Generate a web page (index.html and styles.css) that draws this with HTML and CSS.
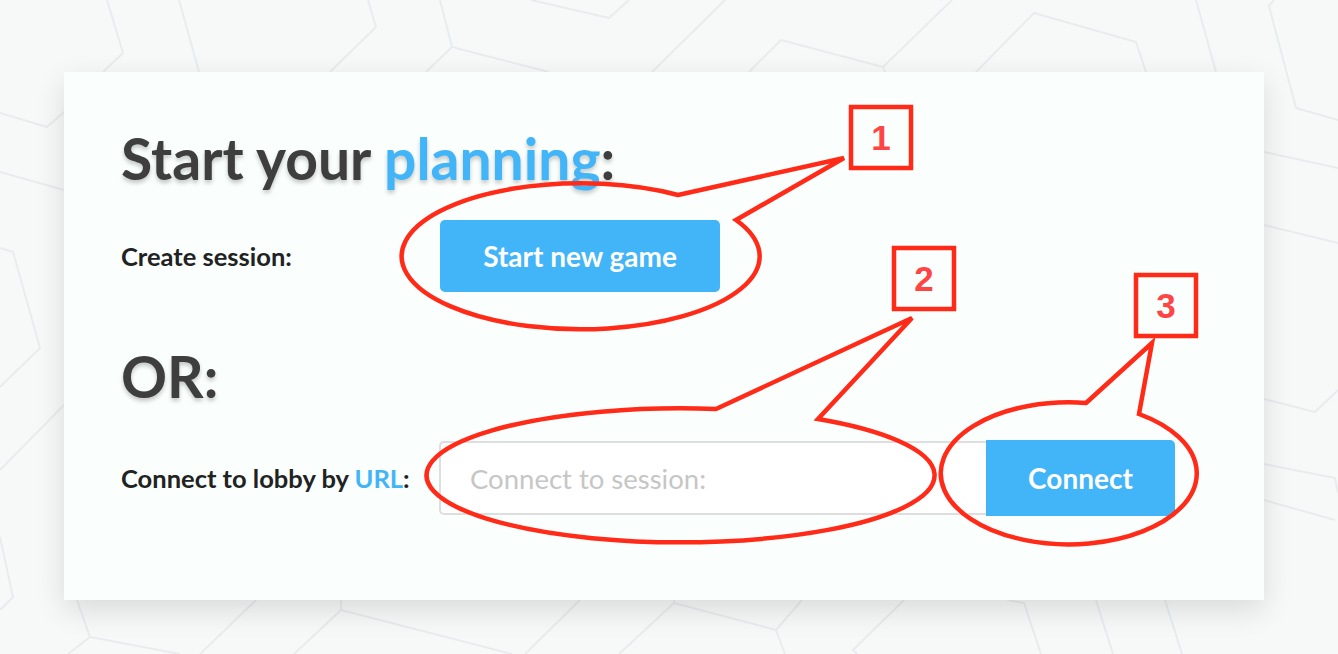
FILE: index.html
```html
<!DOCTYPE html>
<html lang="en">
<head>
<meta charset="utf-8">
<title>Start your planning</title>
<link rel="stylesheet" href="styles.css">
</head>
<body>
<div class="page">
  <main class="card">
    <h1 class="heading">Start your <span class="accent">planning</span>:</h1>
    <div class="row row-create">
      <span class="label">Create session:</span>
      <button class="btn btn-start" type="button">Start new game</button>
    </div>
    <h2 class="heading heading-or">OR:</h2>
    <div class="row row-connect">
      <span class="label">Connect to lobby by <span class="accent">URL</span>:</span>
      <div class="connect-group">
        <input class="session-input" type="text" placeholder="Connect to session:">
        <button class="btn btn-connect" type="button">Connect</button>
      </div>
    </div>
  </main>

  <svg class="annotations" width="1338" height="654" viewBox="0 0 1338 654" aria-hidden="true">
    <g class="marks">
      <path d="M678 195 L844 158 L736 220 A179 73 0 1 1 678 195 Z"/>
      <path d="M716 409 L912 318 L818 419 A254 67 0 1 1 716 409 Z"/>
      <path d="M1086 403 L1152 343 L1139 414 A128 71 0 1 1 1086 403 Z"/>
      <rect x="851" y="107" width="60" height="61"/>
      <rect x="894" y="248" width="60" height="61"/>
      <rect x="1136" y="275" width="60" height="61"/>
    </g>
    <g class="nums">
      <text x="881" y="150">1</text>
      <text x="924" y="291">2</text>
      <text x="1166" y="318">3</text>
    </g>
  </svg>
</div>
</body>
</html>
```

FILE: styles.css
```css
* { box-sizing: border-box; }

html, body {
  margin: 0;
  padding: 0;
}

body {
  width: 1338px;
  height: 654px;
  overflow: hidden;
  font-family: Lato, "Open Sans", "Liberation Sans", sans-serif;
  background-color: #f7f9f9;
  background-image: url("data:image/svg+xml;utf8,<svg xmlns='http://www.w3.org/2000/svg' width='1338' height='654'><g fill='none' stroke='%23e9ecee' stroke-width='2' stroke-linejoin='round'><path d='M107 0 L123 53 L103 72'/><path d='M179 0 L199 72'/><path d='M368 0 L376 27 L330 72'/><path d='M440 0 L452 47 L426 72'/><path d='M452 47 L549 72'/><path d='M531 0 L609 18 L629 0'/><path d='M725 0 L652 72'/><path d='M952 0 L883 67 L781 40 L749 72'/><path d='M883 67 L885 72'/><path d='M976 72 L1034 13 L1136 42 L1146 72'/><path d='M1196 0 L1216 72'/><path d='M1274 0 L1269 6 L1296 108 L1338 120'/><path d='M1264 152 L1338 168'/><path d='M1264 225 L1338 243'/><path d='M1264 399 L1315 412 L1338 390'/><path d='M1264 464 L1335 478 L1338 493'/><path d='M1264 500 L1335 520'/><path d='M0 113 L47 127 L64 112'/><path d='M0 172 L64 190'/><path d='M0 248 L13 252 L40 348 L0 387'/><path d='M64 405 L0 470'/><path d='M0 537 L13 597 L0 610'/><path d='M77 600 L90 637 L68 654'/><path d='M90 637 L180 654'/><path d='M256 600 L200 654'/><path d='M341 600 L341 610 L294 654'/><path d='M341 610 L512 654'/><path d='M580 600 L525 654'/><path d='M674 600 L674 603 L776 630 L802 600'/><path d='M674 603 L619 654'/><path d='M776 630 L785 654'/><path d='M904 600 L853 650 L857 654'/><path d='M1007 600 L1024 603 L1041 654'/><path d='M1096 600 L1113 654'/><path d='M1165 600 L1182 654'/></g></svg>");
  background-repeat: no-repeat;
}

.page {
  position: relative;
  width: 1338px;
  height: 654px;
  padding-top: 72px;
}

.card {
  width: 1200px;
  height: 528px;
  margin-left: 64px;
  padding: 53px 57px 0 57px;
  background: #fafefd;
  box-shadow: 0 10px 28px rgba(0, 0, 0, 0.12);
}

.heading {
  margin: 0;
  font-size: 57px;
  line-height: 67px;
  font-weight: 700;
  color: #3e3e3e;
  text-shadow: 0 3px 4px rgba(0, 0, 0, 0.22);
}

.accent { color: #42b4f8; }

.heading-or {
  margin-top: 51px;
}

.row {
  display: grid;
  grid-template-columns: 318px auto;
  align-items: center;
}

.row-create { margin-top: 28px; }
.row-connect { margin-top: 30px; }

.label {
  font-size: 25.5px;
  font-weight: 700;
  color: #222;
}

.btn {
  font-family: inherit;
  font-weight: 700;
  color: #fff;
  background: #42b4f8;
  border: none;
  cursor: pointer;
}

.btn-start {
  width: 280px;
  height: 72px;
  border-radius: 5px;
  font-size: 28px;
  padding: 0;
  margin-left: 1px;
}

.connect-group {
  display: flex;
  width: 736px;
}

.session-input {
  width: 547px;
  height: 74px;
  margin-top: 1px;
  border: 2px solid #dedede;
  border-right: none;
  border-radius: 5px 0 0 5px;
  background: #fff;
  padding: 0 0 0 29px;
  font-family: inherit;
  font-size: 27.5px;
  color: #333;
  outline: none;
}

.session-input::placeholder { color: #c6c6c6; }

.btn-connect {
  width: 189px;
  height: 76px;
  border-radius: 0 5px 5px 0;
  font-size: 28px;
  padding: 0;
}

.annotations {
  position: absolute;
  left: 0;
  top: 0;
  pointer-events: none;
}

.marks path,
.marks rect {
  fill: none;
  stroke: #ff2a17;
  stroke-width: 4.5;
  stroke-linejoin: miter;
}

.nums text {
  font-family: "Liberation Sans", Arial, sans-serif;
  font-weight: 700;
  font-size: 35px;
  fill: #ff4444;
  text-anchor: middle;
}
```
